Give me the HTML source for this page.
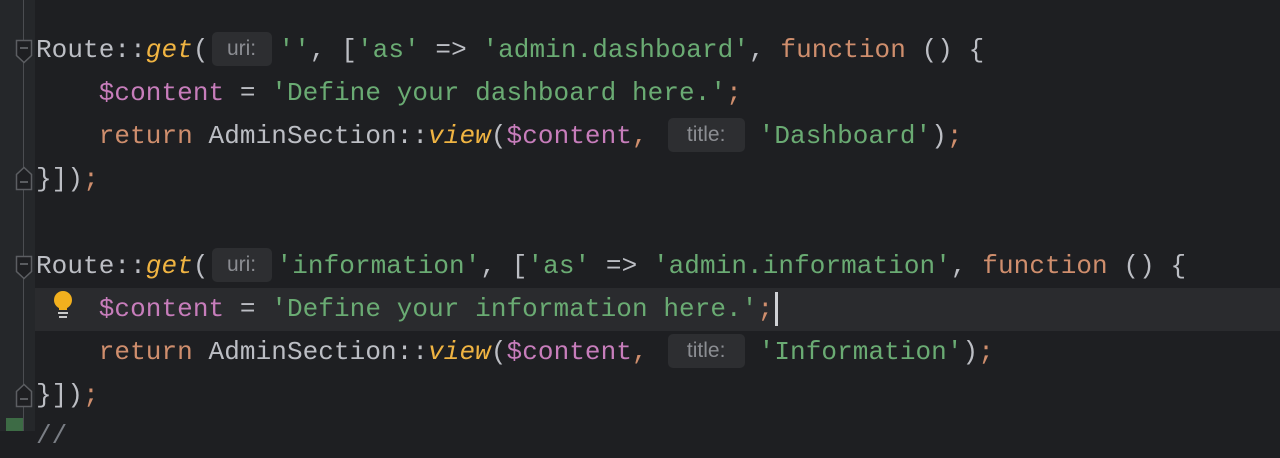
<!DOCTYPE html>
<html><head><style>
body{margin:0;width:1280px;height:431px;background:#1e1f22;overflow:hidden;position:relative;font-family:"Liberation Mono",monospace;}
.g{position:absolute;left:0;top:0;width:35px;height:431px;background:#25272a}
.vl{position:absolute;left:23px;top:0;width:1px;height:431px;background:#4b4d51}
.hl{position:absolute;left:35px;top:288px;width:1245px;height:43px;background:#2a2b2e}
.ln{position:absolute;left:36px;font-size:26px;line-height:43px;height:43px;white-space:pre;color:#bcbec4;letter-spacing:0.08px}
.k{color:#cf8e6d}.s{color:#6aab73}.v{color:#c77dbb}.f{color:#f0b442;font-style:italic}
.h{display:inline-block;font-family:"Liberation Sans",sans-serif;font-size:21px;color:#8b8d92;background:#2d2e31;border-radius:5px;line-height:34px;height:34px;vertical-align:2px;text-align:center;letter-spacing:0}
.fm{position:absolute;left:15px;}
.cur{position:absolute;left:775px;top:292px;width:3px;height:34px;background:#cfd1d5}
</style></head><body>
<div class="g"></div><div class="hl"></div><div class="vl"></div>
<svg class="fm" style="top:39px" width="18" height="26"><path d="M1.5 1.5h15v15l-7.5 7-7.5-7z" fill="#1e1f22" stroke="#5c5e62" stroke-width="1.5"/><path d="M5 9h8" stroke="#6f7175" stroke-width="1.5"/></svg>
<svg class="fm" style="top:165px" width="18" height="26"><path d="M1.5 24.5h15v-15l-7.5-7-7.5 7z" fill="#1e1f22" stroke="#5c5e62" stroke-width="1.5"/><path d="M5 17h8" stroke="#6f7175" stroke-width="1.5"/></svg>
<svg class="fm" style="top:255px" width="18" height="26"><path d="M1.5 1.5h15v15l-7.5 7-7.5-7z" fill="#1e1f22" stroke="#5c5e62" stroke-width="1.5"/><path d="M5 9h8" stroke="#6f7175" stroke-width="1.5"/></svg>
<svg class="fm" style="top:382px" width="18" height="26"><path d="M1.5 24.5h15v-15l-7.5-7-7.5 7z" fill="#1e1f22" stroke="#5c5e62" stroke-width="1.5"/><path d="M5 17h8" stroke="#6f7175" stroke-width="1.5"/></svg>
<div style="position:absolute;left:6px;top:418px;width:17px;height:13px;background:#3d6b45"></div>
<svg style="position:absolute;left:52px;top:290px" width="22" height="30"><circle cx="11" cy="10" r="9" fill="#f2b01e"/><rect x="7" y="15" width="8" height="5" fill="#f2b01e"/><rect x="6" y="22" width="10" height="2" fill="#c9c9c9"/><rect x="7" y="26" width="8" height="2" fill="#c9c9c9"/></svg>
<div class="ln" style="top:29px">Route::<span class="f">get</span>(<span class="h" style="width:60px;margin:0 7px 0 3px">uri:</span><span class="s">''</span>, [<span class="s">'as'</span> =&gt; <span class="s">'admin.dashboard'</span>, <span class="k">function</span> () {</div>
<div class="ln" style="top:72px">    <span class="v">$content</span> = <span class="s">'Define your dashboard here.'</span><span class="k">;</span></div>
<div class="ln" style="top:115px">    <span class="k">return</span> AdminSection::<span class="f">view</span>(<span class="v">$content</span><span class="k">,</span><span class="h" style="width:77px;margin:0 14px 0 20px">title:</span><span class="s">'Dashboard'</span>)<span class="k">;</span></div>
<div class="ln" style="top:158px">}])<span class="k">;</span></div>
<div class="ln" style="top:245px">Route::<span class="f">get</span>(<span class="h" style="width:60px;margin:0 5px 0 3px">uri:</span><span class="s">'information'</span>, [<span class="s">'as'</span> =&gt; <span class="s">'admin.information'</span>, <span class="k">function</span> () {</div>
<div class="ln" style="top:288px">    <span class="v">$content</span> = <span class="s">'Define your information here.'</span><span class="k">;</span></div>
<div class="ln" style="top:331px">    <span class="k">return</span> AdminSection::<span class="f">view</span>(<span class="v">$content</span><span class="k">,</span><span class="h" style="width:77px;margin:0 14px 0 20px">title:</span><span class="s">'Information'</span>)<span class="k">;</span></div>
<div class="ln" style="top:374px">}])<span class="k">;</span></div>
<div class="ln" style="top:415px;color:#7a7e85">//</div>
<div class="cur"></div>
</body></html>
